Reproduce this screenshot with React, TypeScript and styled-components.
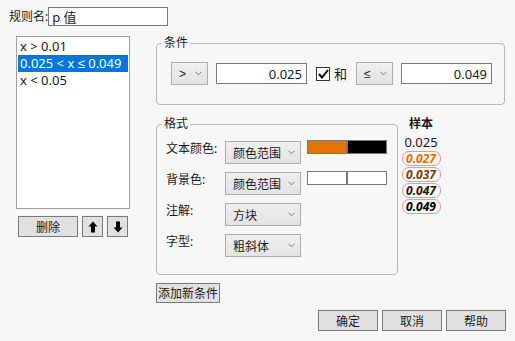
import React from "react";
import styled, {createGlobalStyle} from "styled-components";

const GlobalStyle = createGlobalStyle`
  html, body {
    margin: 0;
    padding: 0;
    background: #f7f7f7;
  }
  body {
    font-family: "Noto Sans", "Liberation Sans", "Noto Sans CJK SC", sans-serif;
    font-size: 12px;
    color: #1a1a1a;
  }
`;

const Window = styled.div`
  width: 515px;
  height: 341px;
  box-sizing: border-box;
  padding: 7px 9px 0 9px;
  display: flex;
  flex-direction: column;
`;

const NameRow = styled.div`
  display: flex;
  align-items: center;
  height: 19px;
`;

const Label = styled.span`
  white-space: nowrap;
  line-height: 16px;
`;

const TextBox = styled.div<{ $w: number; $h?: number; $align?: string }>`
  width: ${({$w}) => $w}px;
  height: ${({$h}) => $h ?? 19}px;
  box-sizing: border-box;
  border: 1px solid #7a7a7a;
  background: #fff;
  display: flex;
  align-items: center;
  justify-content: ${({$align}) => $align ?? "flex-start"};
  padding: 0 4px 0 3px;
  font-size: 13px;
`;

const Main = styled.div`
  display: flex;
  margin-top: 10px;
`;

const LeftCol = styled.div`
  margin-left: 7px;
  width: 114px;
  display: flex;
  flex-direction: column;
`;

const List = styled.div`
  height: 173px;
  box-sizing: border-box;
  border: 1px solid #a0a0a0;
  background: #fff;
  padding: 1px;
`;

const ListItem = styled.div<{ $selected?: boolean }>`
  height: 17px;
  line-height: 17px;
  padding-left: 2px;
  font-size: 13px;
  white-space: nowrap;
  background: ${({$selected}) => ($selected ? "#0078d7" : "transparent")};
  color: ${({$selected}) => ($selected ? "#fff" : "#1a1a1a")};
`;

const ListButtons = styled.div`
  display: flex;
  gap: 4px;
  margin-top: 7px;
  padding-left: 2px;
`;

const Button = styled.div<{ $w: number }>`
  width: ${({$w}) => $w}px;
  height: 21px;
  box-sizing: border-box;
  border: 1px solid #7a7a7a;
  background: #e1e1e1;
  display: flex;
  align-items: center;
  justify-content: center;
  font-size: 12px;
`;

const RightCol = styled.div`
  margin-left: 26px;
  display: flex;
  flex-direction: column;
`;

const Group = styled.fieldset<{ $w: number; $h: number }>`
  margin: 0;
  width: ${({$w}) => $w}px;
  height: ${({$h}) => $h}px;
  box-sizing: border-box;
  border: 1px solid #b8b8b8;
  border-radius: 4px;
  padding: 0;
`;

const Legend = styled.legend`
  margin-left: 5px;
  padding: 0 2px;
  line-height: 14px;
  font-size: 12px;
`;

const CondRow = styled.div`
  display: flex;
  align-items: center;
  padding: 12px 0 0 14px;
`;

const Select = styled.div<{ $w: number }>`
  width: ${({$w}) => $w}px;
  height: 23px;
  box-sizing: border-box;
  border: 1px solid #adadad;
  background: linear-gradient(#efefef, #e3e3e3);
  display: flex;
  align-items: center;
  justify-content: space-between;
  padding: 0 5px 0 7px;
  font-size: 12px;
`;

const Op = styled.span`
  font-family: "Liberation Sans", sans-serif;
  font-size: 12px;
`;

const Chevron = () => (
    <svg width="7" height="5" viewBox="0 0 7 5">
        <path d="M0.5 0.8 L3.5 3.8 L6.5 0.8" fill="none" stroke="#777" strokeWidth="1"/>
    </svg>
);

const CheckBox = styled.div`
  width: 14px;
  height: 14px;
  box-sizing: border-box;
  border: 1px solid #333;
  background: #fff;
  display: flex;
  align-items: center;
  justify-content: center;
  margin: 0 4px 0 9px;
`;

const AndLabel = styled.span`
  margin-right: 9px;
  font-size: 13px;
`;

const FormatRow = styled.div`
  display: flex;
  margin-top: 12px;
`;

const FormatGrid = styled.div`
  display: grid;
  grid-template-columns: 59px 76px 80px;
  row-gap: 8px;
  padding: 10px 0 0 9px;
  align-items: start;
`;

const FieldLabel = styled.span`
  font-size: 12px;
  line-height: 16px;
`;

const ColorBar = styled.div`
  margin-left: 6px;
  margin-top: -1px;
  width: 80px;
  height: 14px;
  box-sizing: border-box;
  border: 1px solid #777;
  display: flex;
`;

const Swatch = styled.div<{ $color: string; $divider?: boolean }>`
  flex: 1;
  background: ${({$color}) => $color};
  border-right: ${({$divider}) => ($divider ? "2px solid #777" : "none")};
`;

const SampleCol = styled.div`
  margin-left: 3px;
  width: 40px;
  display: flex;
  flex-direction: column;
  align-items: center;
  margin-top: -1px;
`;

const SampleHead = styled.div`
  font-weight: bold;
  line-height: 16px;
  font-size: 12px;
`;

const SamplePlain = styled.div`
  line-height: 16px;
  margin-top: 2px;
  font-size: 13px;
`;

const Pill = styled.div<{ $color: string }>`
  width: 39px;
  height: 15px;
  box-sizing: border-box;
  border: 1.5px solid #f0929b;
  border-radius: 7px;
  margin-top: 1px;
  display: flex;
  align-items: center;
  justify-content: center;
  font-weight: bold;
  font-style: italic;
  font-size: 12px;
  color: ${({$color}) => $color};
`;

const AddRow = styled.div`
  margin-top: 8px;
`;

const AddButton = styled.div`
  display: inline-flex;
  height: 20px;
  box-sizing: border-box;
  border: 1px solid #7a7a7a;
  background: #e1e1e1;
  align-items: center;
  padding: 0 1px;
  font-size: 12px;
`;

const Footer = styled.div`
  display: flex;
  justify-content: flex-end;
  gap: 4px;
  margin-top: 7px;
`;

const Arrow = ({down}: { down?: boolean }) => (
    <svg width="10" height="12" viewBox="0 0 10 12" style={{transform: down ? "rotate(180deg)" : undefined}}>
        <path d="M5 0.5 L9.5 5.5 L7 5.5 L7 11.5 L3 11.5 L3 5.5 L0.5 5.5 Z" fill="#000"/>
    </svg>
);

const rules = ["x > 0.01", "0.025 < x ≤ 0.049", "x < 0.05"];
const samples = [
    {v: "0.027", c: "#e07000"},
    {v: "0.037", c: "#7a3d00"},
    {v: "0.047", c: "#2a1500"},
    {v: "0.049", c: "#000"},
];
const fields = [
    {label: "文本颜色:", value: "颜色范围", bar: ["#e37400", "#000"]},
    {label: "背景色:", value: "颜色范围", bar: ["#fff", "#fff"]},
    {label: "注解:", value: "方块"},
    {label: "字型:", value: "粗斜体"},
];

export default function App() {
    return (
        <>
            <GlobalStyle/>
            <Window>
                <NameRow>
                    <Label>规则名:</Label>
                    <TextBox $w={120}>p 值</TextBox>
                </NameRow>
                <Main>
                    <LeftCol>
                        <List>
                            {rules.map((r, i) => (
                                <ListItem key={r} $selected={i === 1}>{r}</ListItem>
                            ))}
                        </List>
                        <ListButtons>
                            <Button $w={60}>删除</Button>
                            <Button $w={21}><Arrow/></Button>
                            <Button $w={21}><Arrow down/></Button>
                        </ListButtons>
                    </LeftCol>
                    <RightCol>
                        <Group $w={349} $h={69}>
                            <Legend>条件</Legend>
                            <CondRow>
                                <Select $w={37}><Op>&gt;</Op><Chevron/></Select>
                                <TextBox $w={91} $h={21} $align="flex-end" style={{marginLeft: 8}}>0.025</TextBox>
                                <CheckBox>
                                    <svg width="11" height="10" viewBox="0 0 11 10">
                                        <path d="M1 5 L4 8.5 L10 1" fill="none" stroke="#000" strokeWidth="2"/>
                                    </svg>
                                </CheckBox>
                                <AndLabel>和</AndLabel>
                                <Select $w={37}><Op>≤</Op><Chevron/></Select>
                                <TextBox $w={91} $h={21} $align="flex-end" style={{marginLeft: 8}}>0.049</TextBox>
                            </CondRow>
                        </Group>
                        <FormatRow>
                            <Group $w={242} $h={158}>
                                <Legend>格式</Legend>
                                <FormatGrid>
                                    {fields.map(f => (
                                        <React.Fragment key={f.label}>
                                            <FieldLabel>{f.label}</FieldLabel>
                                            <Select $w={76}>{f.value}<Chevron/></Select>
                                            {f.bar ? (
                                                <ColorBar>
                                                    <Swatch $color={f.bar[0]} $divider/>
                                                    <Swatch $color={f.bar[1]}/>
                                                </ColorBar>
                                            ) : <span/>}
                                        </React.Fragment>
                                    ))}
                                </FormatGrid>
                            </Group>
                            <SampleCol>
                                <SampleHead>样本</SampleHead>
                                <SamplePlain>0.025</SamplePlain>
                                {samples.map(s => (
                                    <Pill key={s.v} $color={s.c}>{s.v}</Pill>
                                ))}
                            </SampleCol>
                        </FormatRow>
                        <AddRow>
                            <AddButton>添加新条件</AddButton>
                        </AddRow>
                    </RightCol>
                </Main>
                <Footer>
                    <Button $w={60}>确定</Button>
                    <Button $w={60}>取消</Button>
                    <Button $w={60}>帮助</Button>
                </Footer>
            </Window>
        </>
    );
}
